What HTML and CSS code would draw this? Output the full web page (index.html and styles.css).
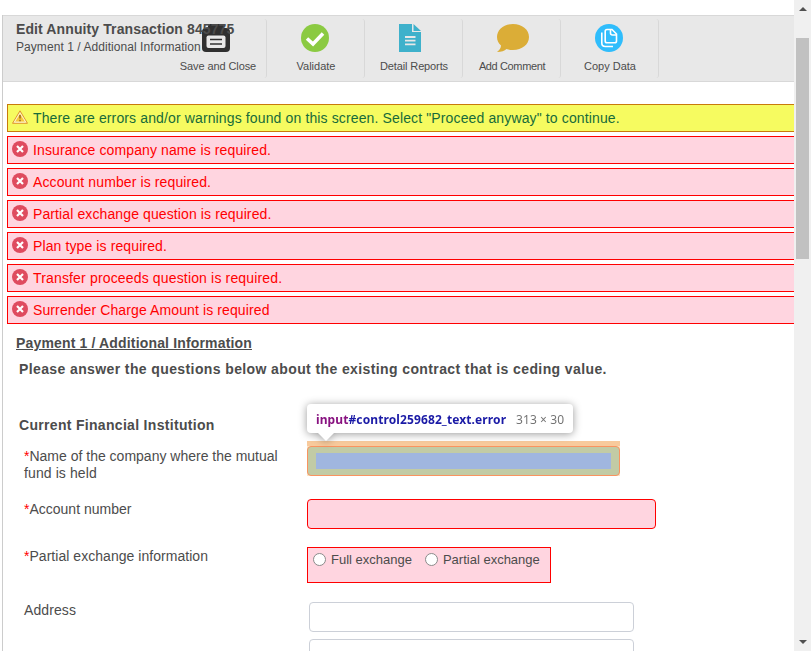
FILE: index.html
```html
<!DOCTYPE html>
<html lang="en">
<head>
<meta charset="utf-8">
<title>Edit Annuity Transaction</title>
<link rel="stylesheet" href="styles.css">
</head>
<body>
<svg class="defs" width="0" height="0"><defs>
<symbol id="err" viewBox="0 0 16 16"><circle cx="8" cy="8" r="8" fill="#df4b5f"/><path d="M5 5l6 6M11 5l-6 6" stroke="#fff" stroke-width="2.2"/></symbol>
</defs></svg>
<div class="window">
<main class="page">
  <header class="toolbar">
    <div class="heading"><h1><span class="t-title">Edit Annuity Transaction 845775</span></h1><p><span class="t-sub">Payment 1 / Additional Information</span></p></div>
    <div class="tool save">
      <svg width="28" height="28" viewBox="0 0 28 28"><rect y="4" width="28" height="24" rx="4" fill="#303030"/><path d="M6 5V2q0-2 2-2h12q2 0 2 2v3z" fill="#303030"/><rect x="4.500" y="11.500" width="19" height="12.500" rx="2" fill="#e8e8e8"/><path d="M8 15.500h12M8 20h12" stroke="#303030" stroke-width="1.700"/></svg>
      <span class="l-save">Save and Close</span>
    </div>
    <div class="tool">
      <svg width="28" height="28" viewBox="0 0 28 28"><circle cx="14" cy="14" r="14" fill="#8bca42"/><path d="M6 14.500l6 5.500L22 9.500" fill="none" stroke="#fff" stroke-width="3.500"/></svg>
      <span class="l-val">Validate</span>
    </div>
    <div class="tool">
      <svg width="28" height="28" viewBox="0 0 28 28"><path d="M0 0h13v8h9v20H0z" fill="#3eb1cb"/><path d="M14.500 0l7.500 7h-7.500z" fill="#3eb1cb"/><path d="M6 13h10.500M6 16.700h10.500M6 20.400h10.500" stroke="#e8e8e8" stroke-width="1.800"/></svg>
      <span class="l-det">Detail Reports</span>
    </div>
    <div class="tool comment">
      <svg width="32" height="28" viewBox="0 0 32 28"><path d="M16 0C25 0 32 5.500 32 13s-7 13-16 13c-2.500 0-4.500-.3-6.500-1-2 2-5 3-9.500 3 2.500-2 4-4 4-6.500C1.500 19.500 0 16.500 0 13 0 5.500 7 0 16 0z" fill="#dbad37"/></svg>
      <span class="l-com">Add Comment</span>
    </div>
    <div class="tool">
      <svg width="28" height="28" viewBox="0 0 28 28"><circle cx="14" cy="14" r="14" fill="#2fbdfc"/><path d="M12 5.500h5l4.500 4.500v7q0 1.800-1.800 1.800H12q-1.800 0-1.800-1.800V7.300q0-1.800 1.800-1.800zM15.500 6v3q0 2 2 2h3.500M6.800 8.500V19q0 3.500 3.500 3.500H18" fill="none" stroke="#fff" stroke-width="1.600"/></svg>
      <span class="l-copy">Copy Data</span>
    </div>
  </header>
  <section class="alerts">
    <div class="alert warning"><svg width="16" height="14" viewBox="0 0 16 14"><path d="M8 .8L15.500 13.300H.5z" fill="#fbeaa0" stroke="#df962e"/><path d="M8 3l5.500 9h-11z" fill="#f6c83c" stroke="#fff8dc" stroke-width=".8"/><path d="M8 5v3.500M8 9.700v1.500" stroke="#9a6420" stroke-width="1.500"/></svg><span class="a0">There are errors and/or warnings found on this screen. Select "Proceed anyway" to continue.</span></div>
    <div class="alert"><svg width="16" height="16"><use href="#err"/></svg><span>Insurance company name is required.</span></div>
    <div class="alert"><svg width="16" height="16"><use href="#err"/></svg><span>Account number is required.</span></div>
    <div class="alert"><svg width="16" height="16"><use href="#err"/></svg><span>Partial exchange question is required.</span></div>
    <div class="alert"><svg width="16" height="16"><use href="#err"/></svg><span>Plan type is required.</span></div>
    <div class="alert"><svg width="16" height="16"><use href="#err"/></svg><span class="a5">Transfer proceeds question is required.</span></div>
    <div class="alert"><svg width="16" height="16"><use href="#err"/></svg><span>Surrender Charge Amount is required</span></div>
  </section>
  <h2><span class="t-pay">Payment 1 / Additional Information</span></h2>
  <p class="intro">Please answer the questions below about the existing contract that is ceding value.</p>
  <h3>Current Financial Institution</h3>
  <form class="form">
    <div class="row r1">
      <div class="label"><i>*</i>Name of the company where the mutual<br><span class="wide">fund is held</span></div>
      <div class="inspected">
        <div class="field-box"><div class="content-box"></div></div>
        <div class="tip"><b><span class="tag">input</span><span class="sel">#control259682_text.error</span></b><span class="dims">313 × 30</span></div>
      </div>
    </div>
    <div class="row r2"><div class="label"><i>*</i>Account number</div><input class="error" type="text"></div>
    <div class="row r3">
      <div class="label"><i>*</i><span class="f3">Partial exchange information</span></div>
      <div class="choices"><label><input type="radio" name="ex"><span>Full exchange</span></label><label><input type="radio" name="ex"><span>Partial exchange</span></label></div>
    </div>
    <div class="row r4"><div class="label"><span class="wide">Address</span></div><div class="stack"><input type="text"><input type="text"></div></div>
  </form>
</main>
<aside class="scrollbar"><span class="up"></span><span class="thumb"></span><span class="down"></span></aside>
</div>
</body>
</html>
```
FILE: styles.css
```css
* { box-sizing: border-box; }
body { margin: 0; background: #fff; color: #4c4c4c; font-family: "Liberation Sans", Arial, sans-serif; font-size: 14px; overflow: hidden; }
.defs { position: absolute; }
h1, h2, h3, p { margin: 0; }
.window { display: flex; width: 811px; height: 651px; overflow: hidden; }
.page { width: 792px; height: 636px; margin: 15px 0 0 2px; border-left: 1px solid #ccc; overflow: hidden; }
.toolbar { display: flex; height: 67px; background: #e8e8e8; border: solid #d8d8d8; border-width: 1px 0; }
.heading { position: relative; z-index: 1; width: 166px; padding: 4px 0 0 13px; white-space: nowrap; }
.heading h1 { font-size: 14px; line-height: 18px; letter-spacing: .11px; }
.heading p { font-size: 12px; line-height: 18px; letter-spacing: .06px; }
.tool { display: flex; flex-direction: column; align-items: center; width: 98px; height: 59px; margin-top: 3px; padding-top: 5px; border-right: 1px solid #d8d8d8; border-radius: 0 3px 3px 0; font-size: 11px; line-height: 14px; white-space: nowrap; }
.tool svg { margin-left: -2px; }
.tool span { margin: 7px 0 0 1px; }
.tool.save svg { margin-left: -4px; }
.tool.comment svg { margin-left: 2px; }
.l-save { letter-spacing: -.1px; }
.l-det { letter-spacing: -.13px; }
.l-com { letter-spacing: -.37px; }
.alerts { display: grid; gap: 4px; margin: 22px 0 0 4px; width: 800px; }
.alert { display: flex; align-items: center; height: 28px; padding-left: 4px; gap: 5px; background: #ffd5e0; border: 1px solid #f00; color: #f00; line-height: 20px; letter-spacing: .11px; white-space: nowrap; }
.alert svg { margin-top: -3px; flex: none; }
.a0 { letter-spacing: .13px; }
.a5 { letter-spacing: .16px; }
.warning { background: #f6fb60; border-color: #c87a0c; color: #176b3a; }
h2 { margin: 10px 0 0 13px; font-size: 14px; line-height: 18px; text-decoration: underline; }
.t-pay { letter-spacing: .16px; }
.intro { margin: 7px 0 0 16px; font-weight: bold; line-height: 20px; font-size: 14px; letter-spacing: .39px; white-space: nowrap; }
h3 { margin: 36px 0 0 16px; font-size: 14px; line-height: 20px; letter-spacing: .31px; }
.form { margin: 6px 0 0 21px; }
.row { display: grid; grid-template-columns: 283px 1fr; align-items: start; }
.label { line-height: 17px; white-space: nowrap; }
.label i { color: #f00; font-style: normal; }
.wide { letter-spacing: .1px; }
.f3 { letter-spacing: .04px; }
input[type=text] { display: block; width: 325px; height: 30px; margin: 0; border: 1px solid #ccd0d8; border-radius: 4px; background: #fff; padding: 0 8px; }
.r1 { height: 58px; }
.r1 .label { padding-top: 7px; }
.r2 { height: 48px; }
.r2 .label { padding-top: 2px; }
.row input.error { width: 349px; border-color: #f00; background: #ffd5e0; }
.r3 { height: 55px; }
.r3 .label { padding-top: 1px; }
.stack { display: grid; gap: 7px; margin-left: 2px; }
.inspected { position: relative; width: 313px; height: 35px; border-top: 5px solid #f8ca9c; background: #fae7c8; }
.field-box { height: 30px; padding: 6px 8px; border: 1px solid #fa9360; border-radius: 4px; background: #c2cba5; }
.content-box { height: 16px; background: #a0b6df; }
.tip { position: absolute; left: 0; top: -42px; display: flex; align-items: center; width: 266px; height: 29px; padding: 2px 0 0 9px; border-radius: 4px; background: #fff; filter: drop-shadow(0 1px 4px rgba(0,0,0,.4)); font: 12px/17px "Noto Sans", sans-serif; white-space: nowrap; }
.tip::after { content: ""; position: absolute; left: 11px; top: 29px; border: solid transparent; border-width: 8px 8px 0; border-top-color: #fff; }
.tag { color: #881280; letter-spacing: .1px; }
.sel { color: #1a1aa6; letter-spacing: .11px; }
.dims { position: absolute; left: 209px; color: #747474; letter-spacing: .1px; }
.choices { display: flex; gap: 13px; width: 244px; height: 36px; padding: 3px 5px; background: #ffd5e0; border: 1px solid #f00; white-space: nowrap; font-size: 13px; line-height: 18px; }
.choices label { display: flex; gap: 5px; height: 18px; }
.choices input { appearance: none; width: 13px; height: 13px; margin: 2px 0 0; border: 1px solid #8b8b8b; border-radius: 50%; background: #fff; }
.scrollbar { display: flex; flex-direction: column; align-items: center; width: 17px; height: 651px; background: #f0f0f0; }
.up { margin-top: 7px; border: solid transparent; border-width: 0 4px 4px; border-bottom-color: #505050; }
.thumb { width: 13px; height: 221px; margin-top: 27px; background: #c1c1c1; }
.down { margin: auto 0 7px; border: solid transparent; border-width: 4px 4px 0; border-top-color: #505050; }
```
